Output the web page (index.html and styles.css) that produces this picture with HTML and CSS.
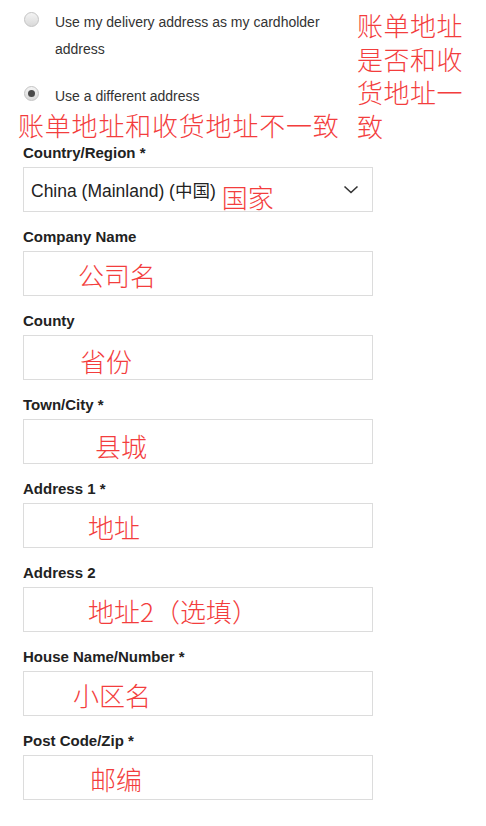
FILE: index.html
```html
<!DOCTYPE html>
<html lang="zh-CN">
<head>
<meta charset="utf-8">
<title>Billing address</title>
<link rel="stylesheet" href="styles.css">
</head>
<body>
<div class="page">
  <div class="top">
    <div class="choices">
      <label class="choice choice-first">
        <span class="radio"></span>
        <span class="choice-text">Use my delivery address as my cardholder address</span>
      </label>
      <label class="choice choice-second">
        <span class="radio radio-on"></span>
        <span class="choice-text">Use a different address</span>
      </label>
      <div class="note note-wide">账单地址和收货地址不一致</div>
    </div>
    <div class="note note-side">账单地址是否和收货地址一致</div>
  </div>

  <div class="field">
    <div class="label">Country/Region *</div>
    <div class="box select">
      <span class="select-value">China (Mainland) (中国)</span>
      <span class="note note-country">国家</span>
      <svg class="chev" width="16" height="9" viewBox="0 0 16 9"><polyline points="1.5,1.5 8,7.5 14.5,1.5" fill="none" stroke="#333" stroke-width="1.6"/></svg>
    </div>
  </div>

  <div class="field">
    <div class="label">Company Name</div>
    <div class="box"><span class="note in-box p-company">公司名</span></div>
  </div>

  <div class="field">
    <div class="label">County</div>
    <div class="box"><span class="note in-box p-county">省份</span></div>
  </div>

  <div class="field">
    <div class="label">Town/City *</div>
    <div class="box"><span class="note in-box p-town">县城</span></div>
  </div>

  <div class="field">
    <div class="label">Address 1 *</div>
    <div class="box"><span class="note in-box p-addr1">地址</span></div>
  </div>

  <div class="field">
    <div class="label">Address 2</div>
    <div class="box"><span class="note in-box p-addr2">地址2（选填）</span></div>
  </div>

  <div class="field">
    <div class="label">House Name/Number *</div>
    <div class="box"><span class="note in-box p-house">小区名</span></div>
  </div>

  <div class="field">
    <div class="label">Post Code/Zip *</div>
    <div class="box"><span class="note in-box p-post">邮编</span></div>
  </div>
</div>
</body>
</html>
```

FILE: styles.css
```css
html, body {
  margin: 0;
  padding: 0;
  background: #fff;
}

body {
  font-family: "Liberation Sans", Arial, "Noto Sans CJK SC", sans-serif;
  color: #333;
}

.page {
  width: 486px;
}

.top {
  display: flex;
  align-items: flex-start;
}

.choices {
  width: 345px;
  padding-top: 9px;
}

.choice {
  display: flex;
  align-items: flex-start;
  padding-left: 24px;
  font-size: 14px;
  line-height: 27px;
  color: #333;
}

.choice-second {
  margin-top: 20px;
}

.radio {
  flex: none;
  width: 13px;
  height: 13px;
  margin-top: 3px;
  margin-right: 16px;
  border: 1px solid #c4c4c4;
  border-radius: 50%;
  background: linear-gradient(#f4f4f4, #d9d9d9);
  display: flex;
  align-items: center;
  justify-content: center;
}

.radio-on::after {
  content: "";
  width: 7px;
  height: 7px;
  border-radius: 50%;
  background: #4a4a4a;
}

.choice-text {
  width: 290px;
}

.note {
  font-family: "Noto Sans CJK SC", "Noto Sans CJK JP", sans-serif;
  font-weight: 300;
  color: #f33d3d;
  font-size: 26px;
}

.note-wide {
  margin-top: 0;
  margin-bottom: 3px;
  padding-left: 18px;
  line-height: 30px;
  white-space: nowrap;
  letter-spacing: 0.8px;
}

.note-side {
  width: 110px;
  margin-left: 12px;
  padding-top: 8px;
  line-height: 33.5px;
  letter-spacing: 0.5px;
}

.field {
  padding-left: 23px;
  margin-bottom: 15px;
}

.label {
  font-size: 15px;
  line-height: 20px;
  font-weight: bold;
  color: #222;
  margin-bottom: 4px;
}

.box {
  box-sizing: border-box;
  width: 350px;
  height: 45px;
  border: 1px solid #dcdcdc;
  display: flex;
  align-items: center;
}

.select {
  padding-left: 7px;
  padding-right: 13px;
}

.select-value {
  font-size: 17.5px;
  color: #222;
  white-space: nowrap;
}

.note-country {
  margin-left: 6px;
  margin-top: 14px;
  line-height: 26px;
}

.chev {
  margin-left: auto;
}

.in-box {
  line-height: 30px;
  margin-top: 2px;
}

.p-company { padding-left: 54px; }
.p-county { padding-left: 56px; margin-top: 6px; }
.p-town { padding-left: 71px; margin-top: 8px; }
.p-addr1 { padding-left: 64px; }
.p-addr2 { padding-left: 64px; }
.p-house { padding-left: 49px; }
.p-post { padding-left: 66px; }
```
